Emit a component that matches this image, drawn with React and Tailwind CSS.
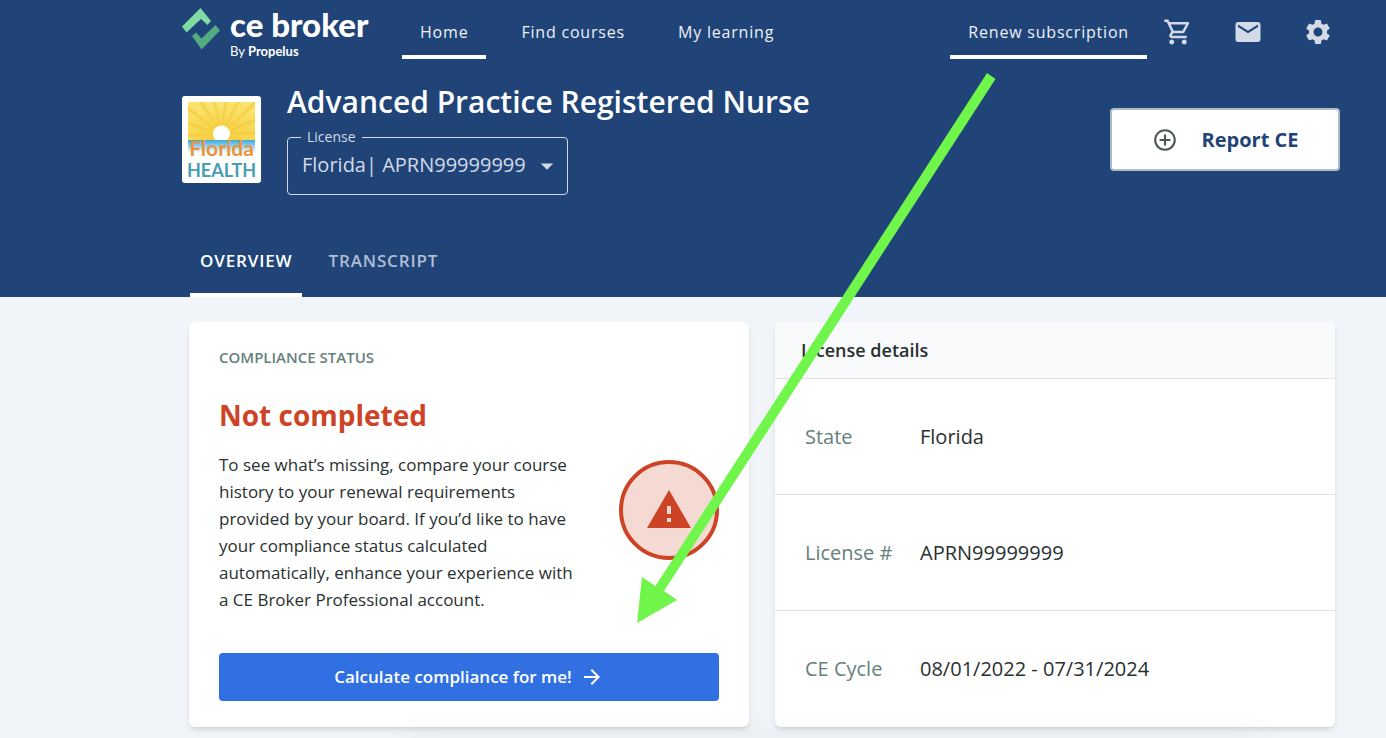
import { MdAddCircleOutline, MdArrowDropDown, MdArrowForward, MdMail, MdOutlineShoppingCart, MdSettings, MdWarning } from "react-icons/md";

const navLinks = [
  { label: "Home", active: true },
  { label: "Find courses", active: false },
  { label: "My learning", active: false },
];

const licenseDetails = [
  { label: "State", value: "Florida" },
  { label: "License #", value: "APRN99999999" },
  { label: "CE Cycle", value: "08/01/2022 - 07/31/2024" },
];

const iconLinks = [
  { label: "Cart", Icon: MdOutlineShoppingCart },
  { label: "Messages", Icon: MdMail },
  { label: "Settings", Icon: MdSettings },
];

const sunRays = Array.from({ length: 18 }, (_, i) => i * 20);

const Logo = () => (
  <a href="#" className="flex h-[50px] w-[194px] shrink-0 gap-[10px] text-white">
    <svg viewBox="0 0 38 42" className="h-[42px] w-[38px] shrink-0">
      <path d="M18.500 0L29 13L25.500 17L19 11L4.500 24.500L0 18.500Z" fill="#7fdaa4" />
      <path d="M14 24.500L19.500 30.500L33.500 17L38 22.500L19.500 41.500L10 28Z" fill="#54ab80" />
    </svg>
    <span className="flex flex-col font-[Lato,sans-serif]">
      <span className="text-[33px] leading-8 font-black whitespace-nowrap">ce broker</span>
      <span className="mt-[3px] text-[13px] leading-4">
        By <b>Propelus</b>
      </span>
    </span>
  </a>
);

const FloridaHealthLogo = () => (
  <div className="h-[87px] w-[79px] shrink-0 rounded-[3px] bg-white p-[6px]">
    <svg viewBox="0 0 67 75" className="h-[75px] w-[67px] overflow-visible">
      <defs>
        <clipPath id="sky">
          <rect width="67" height="38" />
        </clipPath>
        <linearGradient id="sea" x1="0" y1="0" x2="0" y2="1">
          <stop offset="0" stopColor="#38a9df" />
          <stop offset="1" stopColor="#ffffff" />
        </linearGradient>
        <radialGradient id="sun" cx="0.5" cy="0.85" r="0.8">
          <stop offset="0" stopColor="#f6cc3a" />
          <stop offset="1" stopColor="#fae36b" />
        </radialGradient>
      </defs>
      <g clipPath="url(#sky)">
        <rect width="67" height="38" fill="url(#sun)" />
        {sunRays.map((angle) => (
          <path key={angle} d="M33.500 32L90 27L90 32Z" fill="#f3c63c" opacity="0.6" transform={`rotate(${angle} 33.5 32)`} />
        ))}
        <circle cx="33.500" cy="32" r="8.500" fill="#fff" />
      </g>
      <rect y="38" width="67" height="13" fill="url(#sea)" />
      <text x="33.500" y="54" textAnchor="middle" fontFamily="Lato, sans-serif" fontSize="21" fontWeight="700" fill="#ea943a">
        Florida
      </text>
      <text x="33.500" y="75" textAnchor="middle" fontFamily="Lato, sans-serif" fontSize="18" fontWeight="700" fill="#479fb0">
        HEALTH
      </text>
    </svg>
  </div>
);

const NavLink = ({ label, active }) => (
  <a
    href="#"
    className={`flex h-[59px] items-center border-b-4 px-[18px] pt-2 text-base tracking-wider whitespace-nowrap text-[#edf1f6] ${
      active ? "border-white" : "border-transparent"
    }`}
  >
    {label}
  </a>
);

const Header = () => (
  <header className="flex h-[297px] flex-col bg-[#204478] pl-[182px] text-white">
    <div className="flex items-start pr-[53px]">
      <div className="pt-2">
        <Logo />
      </div>
      <nav className="ml-[26px] flex gap-[17px]">
        {navLinks.map((link) => (
          <NavLink key={link.label} {...link} />
        ))}
      </nav>
      <div className="ml-auto flex">
        <NavLink label="Renew subscription" active />
        <div className="ml-4 flex h-16 items-center gap-10 text-[#d2dbe7]">
          {iconLinks.map(({ label, Icon }) => (
            <button key={label} type="button" aria-label={label}>
              <Icon size={30} />
            </button>
          ))}
        </div>
      </div>
    </div>

    <div className="mt-5 flex items-start pr-[46px]">
      <div className="pt-3">
        <FloridaHealthLogo />
      </div>
      <div className="ml-[26px]">
        <h1 className="text-3xl leading-9 font-semibold whitespace-nowrap">Advanced Practice Registered Nurse</h1>
        <fieldset className="mt-[7px] h-[68px] w-[281px] rounded border border-[#d2dbe7] text-[#d2dbe7]">
          <legend className="ml-[13px] px-[6px] text-sm leading-5">
            <label htmlFor="license">License</label>
          </legend>
          <div className="relative">
            <select id="license" className="h-9 w-full appearance-none bg-transparent pr-10 pl-[14px] text-xl leading-7">
              <option>Florida| APRN99999999</option>
            </select>
            <MdArrowDropDown size={30} className="pointer-events-none absolute top-1 right-[5px]" />
          </div>
        </fieldset>
      </div>
      <button
        type="button"
        className="mt-6 ml-auto flex h-[63px] w-[230px] items-center justify-center gap-6 rounded border-2 border-[#a9bcc8] bg-white text-xl font-bold text-[#204478]"
      >
        <MdAddCircleOutline size={26} className="text-[#4b5656]" />
        Report CE
      </button>
    </div>

    <div role="tablist" className="mt-auto ml-2 flex gap-4 text-[17px] font-semibold">
      <button role="tab" aria-selected="true" type="button" className="h-[68px] border-b-4 border-white px-[10px] tracking-wider">
        OVERVIEW
      </button>
      <button role="tab" aria-selected="false" type="button" className="h-[68px] border-b-4 border-transparent px-[10px] tracking-wider text-[#b0bdd3]">
        TRANSCRIPT
      </button>
    </div>
  </header>
);

const ComplianceCard = () => (
  <section className="flex flex-col rounded-md bg-white px-[30px] pt-[25px] pb-[26px] shadow-md">
    <h2 className="text-[15px] leading-5 font-semibold text-[#66807c]">COMPLIANCE STATUS</h2>
    <p className="mt-7 text-[28px] leading-10 font-bold text-[#cc4425]">Not completed</p>
    <div className="mt-4 flex justify-between">
      <p className="w-[362px] text-[17px] leading-[27px] text-[#293030]">
        To see what’s missing, compare your course history to your renewal requirements provided by your board. If you’d like to have your
        compliance status calculated automatically, enhance your experience with a CE Broker Professional account.
      </p>
      <div className="mt-[9px] flex size-[100px] shrink-0 items-center justify-center rounded-full border-4 border-[#cc4425] bg-[#f5d9d3] text-[#cc4425]">
        <MdWarning size={48} />
      </div>
    </div>
    <button
      type="button"
      className="mt-auto flex h-12 items-center justify-center gap-2 rounded bg-[#3170e2] text-[17px] font-semibold text-white"
    >
      Calculate compliance for me!
      <MdArrowForward size={24} />
    </button>
  </section>
);

const LicenseCard = () => (
  <section className="overflow-hidden rounded-md bg-white shadow-md">
    <h2 className="flex h-14 items-center bg-[#f9fafc] px-[26px] text-lg font-semibold text-[#293030]">License details</h2>
    <table className="w-full text-left text-xl">
      <tbody>
        {licenseDetails.map((item) => (
          <tr key={item.label} className="h-[116px] border-t border-[#dfe3e9]">
            <th scope="row" className="w-[145px] pl-[30px] font-normal text-[#66807c]">
              {item.label}
            </th>
            <td className="text-[#293030]">{item.value}</td>
          </tr>
        ))}
      </tbody>
    </table>
  </section>
);

// green arrow from the subscription link to the call to action
const PointerArrow = () => (
  <svg width="1386" height="738" viewBox="0 0 1386 738" className="pointer-events-none absolute top-0 left-0" aria-hidden="true">
    <path d="M987 73L995.500 79L664 591L677 600L637 623L642 577L655.500 586Z" fill="#70f54b" />
  </svg>
);

const App = () => {
  return (
    <div className="relative min-h-screen overflow-hidden bg-[#f1f5fa] font-['Open_Sans',sans-serif]">
      <Header />
      <main className="grid min-h-[441px] grid-cols-2 gap-[26px] pt-[25px] pr-[51px] pb-3 pl-[189px]">
        <ComplianceCard />
        <LicenseCard />
      </main>
      {/* shadow of the panel below the fold */}
      <div className="pointer-events-none absolute right-32 -bottom-10 left-[410px] h-10 shadow-[0_0_40px_rgba(0,0,0,0.05)]" />
      <PointerArrow />
    </div>
  );
};

export default App;
